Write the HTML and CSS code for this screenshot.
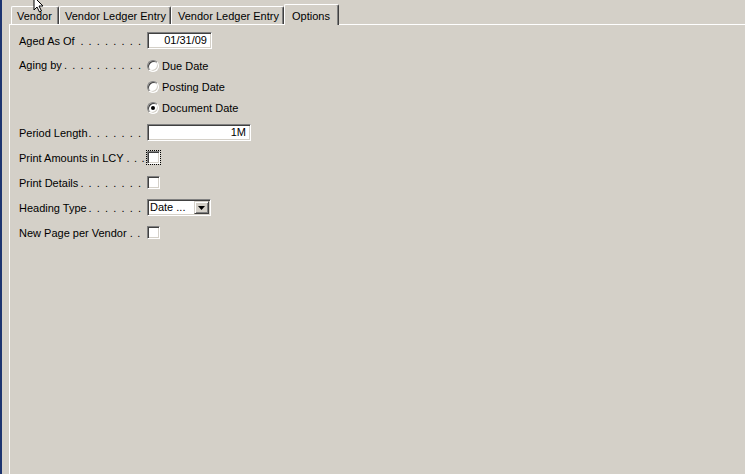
FILE: index.html
```html
<!DOCTYPE html>
<html>
<head>
<meta charset="utf-8">
<link rel="stylesheet" href="styles.css">
</head>
<body>
<div class="window">
  <div class="edge"></div>
  <div class="content">
    <div class="tabs">
      <div class="tab t-vendor">Vendor</div>
      <div class="tab t-ledger">Vendor Ledger Entry</div>
      <div class="tab t-ledger2">Vendor Ledger Entry</div>
      <div class="tab active">Options</div>
    </div>
    <div class="page">
      <div class="form">
        <div class="row">
          <div class="label"><span>Aged As Of</span><span class="dots">. . . . . . . .</span></div>
          <div class="field date">01/31/09</div>
        </div>
        <div class="row group">
          <div class="label"><span>Aging by</span><span class="dots">. . . . . . . . . .</span></div>
          <div class="radios">
            <div class="opt"><span class="radio"></span>Due Date</div>
            <div class="opt"><span class="radio"></span>Posting Date</div>
            <div class="opt"><span class="radio checked"></span>Document Date</div>
          </div>
        </div>
        <div class="row">
          <div class="label"><span>Period Length</span><span class="dots">. . . . . . .</span></div>
          <div class="field period">1M</div>
        </div>
        <div class="row">
          <div class="label"><span>Print Amounts in LCY</span><span class="dots tight">. . .</span></div>
          <span class="check focus"></span>
        </div>
        <div class="row">
          <div class="label"><span>Print Details</span><span class="dots">. . . . . . . .</span></div>
          <span class="check"></span>
        </div>
        <div class="row">
          <div class="label"><span>Heading Type</span><span class="dots">. . . . . . .</span></div>
          <div class="combo"><span class="combo-text">Date ...</span><span class="combo-btn"><svg width="7" height="4" viewBox="0 0 7 4"><path d="M0 0h7L3.5 4z" fill="#000"/></svg></span></div>
        </div>
        <div class="row">
          <div class="label"><span>New Page per Vendor</span><span class="dots tight">. .</span></div>
          <span class="check"></span>
        </div>
      </div>
    </div>
  </div>
  <svg class="cursor" width="14" height="16" viewBox="0 0 14 16"><path d="M1 0v13l3-3 2.5 5 2-1-2.5-5H10z" fill="#fff" stroke="#000" stroke-width="1"/></svg>
</div>
</body>
</html>
```
FILE: styles.css
```css
html, body {
  margin: 0;
  padding: 0;
}
body {
  background: #d4d0c8;
  font-family: "Liberation Sans", Arial, sans-serif;
  font-size: 11px;
  color: #000;
}
.window {
  position: relative;
  display: flex;
  width: 745px;
  height: 474px;
  overflow: hidden;
}
.edge {
  width: 2px;
  background: #1d3470;
  flex: none;
}
.content {
  flex: 1;
  display: flex;
  flex-direction: column;
  padding-left: 7px;
  padding-top: 3px;
}
.tabs {
  display: flex;
  align-items: flex-end;
  height: 21px;
  padding-left: 2px;
  position: relative;
  z-index: 2;
}
.tab {
  box-sizing: border-box;
  height: 18px;
  line-height: 18px;
  padding: 0 0 0 6px;
  border-top: 1px solid #fff;
  border-left: 1px solid #fff;
  border-right: 1px solid #404040;
  box-shadow: inset -1px 0 0 #808080;
  border-top-left-radius: 2px;
  border-top-right-radius: 2px;
  background: #d4d0c8;
  white-space: nowrap;
}
.t-vendor { width: 48px; padding-left: 5px; }
.t-ledger { width: 112px; padding-left: 5px; }
.t-ledger2 { width: 113px; padding-left: 6px; }
.tab.active {
  width: 55px;
  height: 21px;
  line-height: 22px;
  margin-bottom: -1px;
  padding-left: 7px;
}
.page {
  flex: 1;
  border-top: 1px solid #fff;
  border-left: 1px solid #fff;
  position: relative;
  z-index: 1;
}
.form {
  display: flex;
  flex-direction: column;
  gap: 4px;
  padding: 5px 0 0 9px;
}
.row {
  display: flex;
  align-items: center;
  height: 21px;
}
.row.group {
  align-items: flex-start;
  height: 63px;
}
.row.group .label {
  line-height: 21px;
}
.label {
  box-sizing: border-box;
  width: 128px;
  padding-right: 5px;
  flex: none;
  display: flex;
  white-space: nowrap;
}
.dots {
  margin-left: auto;
  letter-spacing: 1.05px;
}
.dots.tight {
  margin-left: 3px;
  letter-spacing: 0.7px;
}
.field {
  box-sizing: border-box;
  height: 17px;
  line-height: 13px;
  background: #fff;
  border-top: 1px solid #808080;
  border-left: 1px solid #808080;
  border-right: 1px solid #fff;
  border-bottom: 1px solid #fff;
  box-shadow: inset 1px 1px 0 #404040, inset -1px -1px 0 #d4d0c8;
  text-align: right;
  padding: 1px 4px 0 2px;
}
.field.date { width: 65px; }
.field.period { width: 104px; }
.radios {
  display: flex;
  flex-direction: column;
}
.opt {
  display: flex;
  align-items: center;
  height: 21px;
}
.radio {
  box-sizing: border-box;
  width: 12px;
  height: 12px;
  border-radius: 50%;
  background: #fff;
  border: 1px solid;
  border-color: #808080 #fff #fff #808080;
  box-shadow: inset 1px 1px 0 #404040, inset -1px -1px 0 #d4d0c8;
  margin-right: 3px;
  position: relative;
  flex: none;
}
.radio.checked::after {
  content: "";
  position: absolute;
  left: 3px;
  top: 3px;
  width: 4px;
  height: 4px;
  border-radius: 50%;
  background: #000;
}
.check {
  box-sizing: border-box;
  width: 13px;
  height: 13px;
  background: #fff;
  border: 1px solid;
  border-color: #808080 #fff #fff #808080;
  box-shadow: inset 1px 1px 0 #404040, inset -1px -1px 0 #d4d0c8;
  display: block;
}
.check.focus {
  outline: 1px dotted #000;
  outline-offset: 0;
}
.combo {
  box-sizing: border-box;
  width: 64px;
  height: 17px;
  display: flex;
  align-items: stretch;
  background: #fff;
  border-top: 1px solid #808080;
  border-left: 1px solid #808080;
  border-right: 1px solid #fff;
  border-bottom: 1px solid #fff;
  box-shadow: inset 1px 1px 0 #404040, inset -1px -1px 0 #d4d0c8;
  padding: 1px;
}
.combo-text {
  flex: 1;
  line-height: 13px;
  padding-left: 1px;
  white-space: nowrap;
  overflow: hidden;
}
.combo-btn {
  box-sizing: border-box;
  width: 15px;
  background: #d4d0c8;
  border-top: 1px solid #d4d0c8;
  border-left: 1px solid #d4d0c8;
  border-right: 1px solid #404040;
  border-bottom: 1px solid #404040;
  box-shadow: inset 1px 1px 0 #fff, inset -1px -1px 0 #808080;
  display: flex;
  align-items: center;
  justify-content: center;
}
.cursor {
  position: absolute;
  left: 33px;
  top: -3px;
  z-index: 5;
}
```
